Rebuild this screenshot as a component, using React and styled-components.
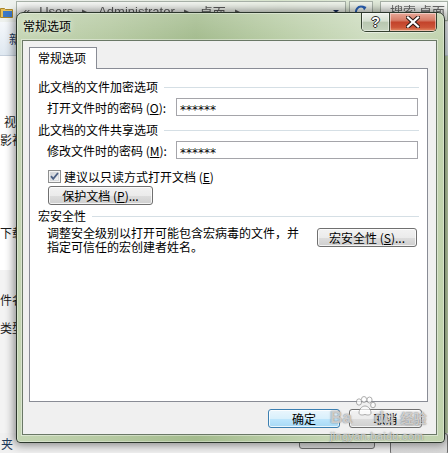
import React from "react";
import styled, { createGlobalStyle } from "styled-components";

const GlobalStyle = createGlobalStyle`
  html, body { margin: 0; padding: 0; }
  body {
    width: 448px;
    height: 453px;
    overflow: hidden;
    background: #fff;
    font-family: "Noto Sans CJK SC", "Liberation Sans", sans-serif;
    font-size: 12px;
    color: #000;
  }
`;

const Screen = styled.div`
  position: relative;
  width: 448px;
  height: 453px;
  overflow: hidden;
`;

/* ---------- explorer window behind the dialog ---------- */

const Explorer = styled.div`
  display: flex;
  flex-direction: column;
  width: 100%;
  height: 100%;
  background: #fff;
`;

const AddressBar = styled.div`
  display: flex;
  align-items: center;
  gap: 3px;
  height: 22px;
  flex-shrink: 0;
  background: linear-gradient(90deg, #eef1ee 0%, #e6ece2 40%, #d8e5cd 62%, #e8eee4 100%);
  filter: blur(0.4px);
`;

const AddressBox = styled.div`
  display: flex;
  align-items: center;
  gap: 9px;
  width: 330px;
  height: 20px;
  padding: 0 6px;
  box-sizing: border-box;
  border: 1px solid #a8b2a8;
  background: rgba(255, 255, 255, 0.55);
  color: #5b5b5b;
  font-family: "Liberation Sans", "Noto Sans CJK SC", sans-serif;
  font-size: 13px;
  white-space: nowrap;
`;

const DropArrow = styled.span`
  margin-left: auto;
  width: 0;
  height: 0;
  border-left: 3px solid transparent;
  border-right: 3px solid transparent;
  border-top: 3px solid #1b2d5a;
`;

const RefreshBox = styled.div`
  display: flex;
  align-items: center;
  justify-content: center;
  width: 24px;
  height: 20px;
  box-sizing: border-box;
  border: 1px solid #a8b2a8;
  background: rgba(255, 255, 255, 0.5);
`;

const SearchBox = styled.div`
  flex: 1;
  height: 20px;
  margin-left: 4px;
  padding-left: 9px;
  box-sizing: border-box;
  border: 1px solid #a8b2a8;
  background: rgba(255, 255, 255, 0.7);
  color: #6d6d6d;
  font-size: 13px;
  line-height: 18px;
  white-space: nowrap;
  overflow: hidden;
`;

const Toolbar = styled.div`
  height: 34px;
  flex-shrink: 0;
  display: flex;
  align-items: center;
  padding-left: 9px;
  box-sizing: border-box;
  background: linear-gradient(#f5f8fb, #dfe8f1);
  border-bottom: 1px solid #c5d0dc;
  color: #1e395b;
  white-space: nowrap;
`;

const ContentRow = styled.div`
  flex: 1;
  display: flex;
  min-height: 0;
`;

const Sidebar = styled.div`
  width: 40px;
  display: flex;
  flex-direction: column;
  background: linear-gradient(90deg, #ffffff 60%, #e4e4e4 100%);
`;

const SideGroup = styled.div`
  display: flex;
  flex-direction: column;
  margin-top: ${(p) => p.$top}px;
  padding-top: ${(p) => p.$pad || 0}px;
  flex: ${(p) => (p.$grow ? 1 : "none")};
  background: ${(p) => p.$bg || "transparent"};
`;

const NavItem = styled.div`
  height: 18px;
  line-height: 18px;
  margin-top: ${(p) => p.$top || 0}px;
  padding-left: ${(p) => p.$left || 0}px;
  white-space: nowrap;
  color: #1a1a1a;
  font-size: 12px;
`;

const MainArea = styled.div`
  flex: 1;
  background: #fff;
`;

const RightFrame = styled.div`
  width: 6px;
  background: linear-gradient(90deg, #6d7d66, #b9cda5 40%, #c8dab4);
`;

const ExplorerFooter = styled.div`
  height: 20px;
  flex-shrink: 0;
  display: flex;
  align-items: flex-start;
  background: #f0f0f0;
`;

const FooterText = styled.div`
  padding: 3px 0 0 1px;
  line-height: 16px;
  color: #1e395b;
`;

const FooterSpacer = styled.div`
  flex: 1;
`;

const GhostButton = styled.div`
  width: ${(p) => p.$w}px;
  height: ${(p) => p.$h}px;
  margin-right: ${(p) => p.$mr || 0}px;
  box-sizing: border-box;
  border: 1px solid #6f6f6f;
  border-radius: 3px;
  background: linear-gradient(#f2f2f2, #d8d8d8);
`;

/* ---------- the dialog ---------- */

const Dialog = styled.div`
  position: absolute;
  left: 16px;
  top: 12px;
  width: 429px;
  height: 431px;
  box-sizing: border-box;
  display: flex;
  flex-direction: column;
  padding: 0 7px 7px 5px;
  border: 1px solid #2c372c;
  border-radius: 7px 7px 4px 4px;
  background:
    linear-gradient(180deg, rgba(255, 255, 255, 0.18), rgba(255, 255, 255, 0) 30px),
    linear-gradient(90deg, #c4d5b3 0%, #b5c9a1 22%, #a3bb8d 42%, #b9cda6 62%, #cddcbf 82%, #c0d2ad 100%);
  box-shadow: 0 0 10px 2px rgba(0, 0, 0, 0.45), inset 0 0 0 1px rgba(255, 255, 255, 0.35);
`;

const TitleBar = styled.div`
  display: flex;
  justify-content: space-between;
  align-items: flex-start;
  height: 27px;
  flex-shrink: 0;
`;

const TitleText = styled.div`
  padding: 5px 0 0 1px;
  line-height: 16px;
  font-size: 12px;
  color: #000;
  text-shadow: 0 0 6px rgba(255, 255, 255, 0.9);
`;

const CaptionGroup = styled.div`
  display: flex;
  height: 18px;
  border: 1px solid #33402f;
  border-top: none;
  border-radius: 0 0 5px 5px;
  overflow: hidden;
  box-shadow: 0 1px 0 rgba(255, 255, 255, 0.5);
`;

const CaptionButton = styled.div`
  display: flex;
  align-items: center;
  justify-content: center;
  width: ${(p) => p.$w}px;
  height: 100%;
  box-sizing: border-box;
  background: ${(p) =>
    p.$close
      ? "linear-gradient(#e9a898 0%, #d67e69 40%, #c3432b 52%, #cc5438 80%, #e38f66 100%)"
      : "linear-gradient(#eef2ec 0%, #d5dfd0 45%, #b8c7b0 52%, #c6d3be 100%)"};
  border-left: ${(p) => (p.$close ? "1px solid #3b4738" : "none")};
  box-shadow: inset 0 0 0 1px rgba(255, 255, 255, 0.45);
`;

const HelpGlyph = styled.span`
  font-family: "Liberation Sans", sans-serif;
  font-weight: bold;
  font-size: 14px;
  line-height: 14px;
  color: #fff;
  text-shadow: -1px 0 #2a2a2a, 1px 0 #2a2a2a, 0 -1px #2a2a2a, 0 1px #2a2a2a;
`;

const Client = styled.div`
  flex: 1;
  display: flex;
  flex-direction: column;
  padding: 6px 8px 0 6px;
  border: 1px solid #6a7866;
  background: #f0f0f0;
  box-shadow: 0 0 0 1px rgba(255, 255, 255, 0.4);
`;

const TabStrip = styled.div`
  display: flex;
  height: 21px;
`;

const Tab = styled.div`
  position: relative;
  z-index: 1;
  width: 68px;
  height: 22px;
  box-sizing: border-box;
  padding-left: 8px;
  border: 1px solid #898c95;
  border-bottom: none;
  background: #fff;
  line-height: 20px;
  white-space: nowrap;
`;

const Panel = styled.div`
  height: 334px;
  box-sizing: border-box;
  display: flex;
  flex-direction: column;
  padding: 10px 8px 0 8px;
  border: 1px solid #898c95;
  background: #fff;
`;

const GroupHeader = styled.div`
  display: flex;
  align-items: center;
  gap: 6px;
  height: 16px;
  line-height: 16px;
  margin-top: ${(p) => p.$top || 0}px;
  white-space: nowrap;
`;

const GroupLine = styled.div`
  flex: 1;
  height: 1px;
  background: #d5dfe5;
`;

const FieldRow = styled.div`
  display: flex;
  align-items: center;
  margin-top: 3px;
  padding-left: 9px;
`;

const FieldLabel = styled.div`
  width: 129px;
  white-space: nowrap;
`;

const PasswordBox = styled.div`
  width: 242px;
  height: 18px;
  box-sizing: border-box;
  padding: 3px 0 0 3px;
  border: 1px solid #a5a5aa;
  background: #fff;
  font-family: "DejaVu Sans", sans-serif;
  font-size: 12px;
  line-height: 16px;
  color: #000;
`;

const Key = styled.span`
  text-decoration: underline;
`;

const CheckRow = styled.label`
  display: flex;
  align-items: center;
  gap: 3px;
  height: 16px;
  margin-top: 9px;
  padding-left: 10px;
  white-space: nowrap;
`;

const Button = styled.div`
  display: flex;
  align-items: center;
  justify-content: center;
  width: ${(p) => p.$w}px;
  height: 19px;
  box-sizing: border-box;
  margin-top: ${(p) => p.$top || 0}px;
  margin-left: ${(p) => p.$left || 0}px;
  border: 1px solid ${(p) => (p.$primary ? "#3c7fb1" : "#707070")};
  border-radius: 3px;
  background: ${(p) =>
    p.$primary
      ? "linear-gradient(#eaf6fd 0%, #d9f0fc 50%, #bee6fd 51%, #a7d9f5 100%)"
      : "linear-gradient(#f2f2f2 0%, #ebebeb 50%, #dddddd 51%, #cfcfcf 100%)"};
  box-shadow: inset 0 0 0 1px rgba(255, 255, 255, 0.75);
  white-space: nowrap;
  line-height: 17px;
  flex-shrink: 0;
`;

const MacroRow = styled.div`
  display: flex;
  justify-content: space-between;
  align-items: flex-start;
  margin-top: 2px;
  padding: 0 2px 0 9px;
`;

const MacroText = styled.div`
  line-height: 14px;
  white-space: nowrap;
`;

const DialogFooter = styled.div`
  display: flex;
  justify-content: flex-end;
  gap: 9px;
  margin-top: 7px;
  padding-right: 6px;
`;

/* ---------- watermark ---------- */

const Watermark = styled.div`
  position: absolute;
  left: 330px;
  top: 396px;
  display: flex;
  flex-direction: column;
  align-items: flex-start;
  pointer-events: none;
  white-space: nowrap;
  color: rgba(255, 255, 255, 0.65);
  text-shadow: 0 0 1px rgba(90, 90, 90, 0.8), 0 0 2px rgba(120, 120, 120, 0.5);
`;

const MarkLogo = styled.div`
  display: flex;
  align-items: flex-end;
  height: 30px;
  font-family: "Liberation Sans", sans-serif;
  font-weight: bold;
  font-size: 17px;
  line-height: 17px;
`;

const MarkWord = styled.span`
  margin-left: ${(p) => p.$gap || 0}px;
  font-family: ${(p) => (p.$cjk ? '"Noto Sans CJK SC", sans-serif' : "inherit")};
  font-size: ${(p) => (p.$cjk ? "13px" : "inherit")};
`;

const MarkPaw = styled.svg`
  align-self: flex-start;
  margin: 0 -3px 0 1px;
  opacity: 0.7;
`;

const MarkUrl = styled.div`
  margin-top: 4px;
  font-family: "Liberation Sans", sans-serif;
  font-size: 11px;
  line-height: 12px;
  letter-spacing: 0.3px;
`;

function FolderIcon() {
  return (
    <svg width="13" height="13" viewBox="0 0 13 13" style={{ flexShrink: 0 }}>
      <path d="M0.5 3.5h4l1 1h7v8h-12z" fill="#e8c15a" stroke="#a9852a" />
      <rect x="3" y="6" width="9" height="6" fill="#3d78c7" />
    </svg>
  );
}

function RefreshIcon() {
  return (
    <svg width="14" height="14" viewBox="0 0 14 14">
      <path d="M11 4.5A5 5 0 1 0 12 8" fill="none" stroke="#2a62b8" strokeWidth="2" />
      <path d="M8.5 1.5l4 1.5-2.5 3.5z" fill="#2a62b8" />
    </svg>
  );
}

function CloseGlyph() {
  return (
    <svg width="14" height="12" viewBox="0 0 14 12">
      <path d="M2 1.5l10 9M12 1.5l-10 9" stroke="#2b1a16" strokeWidth="4.2" strokeLinecap="square" />
      <path d="M2 1.5l10 9M12 1.5l-10 9" stroke="#fff" strokeWidth="2.2" strokeLinecap="square" />
    </svg>
  );
}

function CheckBox() {
  return (
    <svg width="13" height="13" viewBox="0 0 13 13" style={{ flexShrink: 0 }}>
      <defs>
        <linearGradient id="cbfill" x1="0" y1="0" x2="1" y2="1">
          <stop offset="0" stopColor="#cbcfd5" />
          <stop offset="1" stopColor="#f6f6f6" />
        </linearGradient>
      </defs>
      <rect x="0.5" y="0.5" width="12" height="12" fill="#f4f4f4" stroke="#8e8f8f" />
      <rect x="2.5" y="2.5" width="8" height="8" fill="url(#cbfill)" stroke="#d8dadd" />
      <path d="M3 6.2l2.2 2.6L10 3" fill="none" stroke="#4d6185" strokeWidth="1.8" />
    </svg>
  );
}

function Paw() {
  return (
    <MarkPaw width="24" height="20" viewBox="0 0 24 20">
      <g fill="#fff" stroke="#8a8a8a" strokeWidth="1">
        <ellipse cx="6" cy="6" rx="2.6" ry="3.2" />
        <ellipse cx="11" cy="3.5" rx="2.6" ry="3" />
        <ellipse cx="16.5" cy="4" rx="2.6" ry="3" />
        <ellipse cx="20" cy="9" rx="2.4" ry="2.8" />
        <path d="M6 17c0-4 3-7 6-7s6 3 6 7c0 2-3 2.5-6 1.5-3 1-6 0.5-6-1.5z" />
      </g>
    </MarkPaw>
  );
}

export default function App() {
  return (
    <Screen>
      <GlobalStyle />
      <Explorer>
        <AddressBar>
          <FolderIcon />
          <AddressBox>
            <span>«</span>
            <span>Users</span>
            <span>▸</span>
            <span>Administrator</span>
            <span>▸</span>
            <span>桌面</span>
            <span>▸</span>
            <DropArrow />
          </AddressBox>
          <RefreshBox>
            <RefreshIcon />
          </RefreshBox>
          <SearchBox>搜索 桌面</SearchBox>
        </AddressBar>
        <Toolbar>新建文件夹</Toolbar>
        <ContentRow>
          <Sidebar>
            <NavItem $top={57} $left={4}>视频</NavItem>
            <NavItem $left={0}>影视</NavItem>
            <NavItem $top={75} $left={0}>下载</NavItem>
            <SideGroup $top={28} $pad={21} $grow $bg="linear-gradient(90deg, #f3f3f3 60%, #e2e2e2 100%)">
              <NavItem $left={0}>件名</NavItem>
              <NavItem $top={10} $left={0}>类型</NavItem>
            </SideGroup>
          </Sidebar>
          <MainArea />
          <RightFrame />
        </ContentRow>
        <ExplorerFooter>
          <FooterText>夹</FooterText>
          <FooterSpacer />
          <GhostButton $w={76} $h={16} $mr={15} />
          <GhostButton $w={58} $h={22} />
        </ExplorerFooter>
      </Explorer>

      <Dialog>
        <TitleBar>
          <TitleText>常规选项</TitleText>
          <CaptionGroup>
            <CaptionButton $w={27}>
              <HelpGlyph>?</HelpGlyph>
            </CaptionButton>
            <CaptionButton $w={47} $close>
              <CloseGlyph />
            </CaptionButton>
          </CaptionGroup>
        </TitleBar>

        <Client>
          <TabStrip>
            <Tab>常规选项</Tab>
          </TabStrip>
          <Panel>
            <GroupHeader>
              此文档的文件加密选项
              <GroupLine />
            </GroupHeader>
            <FieldRow>
              <FieldLabel>
                打开文件时的密码 (<Key>O</Key>):
              </FieldLabel>
              <PasswordBox>******</PasswordBox>
            </FieldRow>

            <GroupHeader $top={6}>
              此文档的文件共享选项
              <GroupLine />
            </GroupHeader>
            <FieldRow>
              <FieldLabel>
                修改文件时的密码 (<Key>M</Key>):
              </FieldLabel>
              <PasswordBox>******</PasswordBox>
            </FieldRow>

            <CheckRow>
              <CheckBox />
              <span>
                建议以只读方式打开文档 (<Key>E</Key>)
              </span>
            </CheckRow>
            <Button $w={105} $top={2} $left={10}>
              保护文档 (<Key>P</Key>)...
            </Button>

            <GroupHeader $top={3}>
              宏安全性
              <GroupLine />
            </GroupHeader>
            <MacroRow>
              <MacroText>
                调整安全级别以打开可能包含宏病毒的文件，并
                <br />
                指定可信任的宏创建者姓名。
              </MacroText>
              <Button $w={100} $top={2}>
                宏安全性 (<Key>S</Key>)...
              </Button>
            </MacroRow>
          </Panel>
          <DialogFooter>
            <Button $w={72} $primary>
              确定
            </Button>
            <Button $w={73}>取消</Button>
          </DialogFooter>
        </Client>
      </Dialog>

      <Watermark>
        <MarkLogo>
          <MarkWord>Ba</MarkWord>
          <Paw />
          <MarkWord>du</MarkWord>
          <MarkWord $gap={6} $cjk>
            经验
          </MarkWord>
        </MarkLogo>
        <MarkUrl>jingyan.baidu.com</MarkUrl>
      </Watermark>
    </Screen>
  );
}
